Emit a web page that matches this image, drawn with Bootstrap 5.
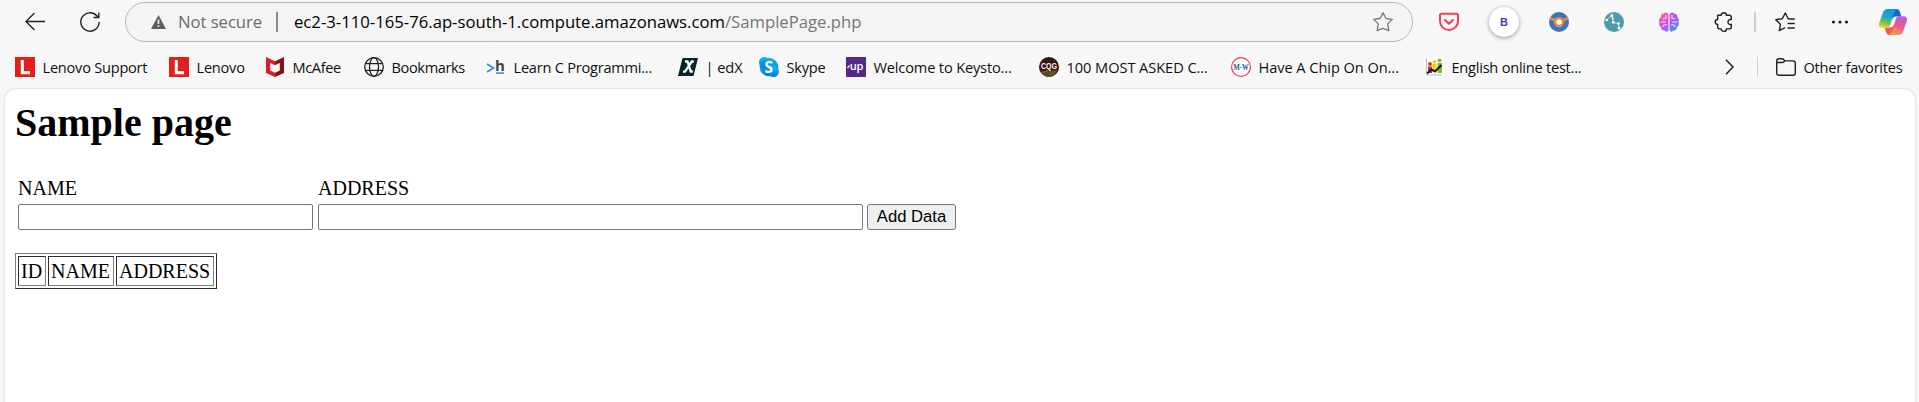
<!DOCTYPE html>
<html lang="en">
<head>
<meta charset="utf-8">
<title>Sample page</title>
<link href="https://cdn.jsdelivr.net/npm/bootstrap@5.3.0/dist/css/bootstrap.min.css" rel="stylesheet">
<style>
body{background:#f7f7f7;font-family:"Open Sans",sans-serif;color:#111;height:402px;overflow:hidden}
svg{display:block;flex:none;overflow:visible}
.toolbar{height:44px;padding-left:25px}
.toolbar,.favbar{white-space:nowrap}
.omnibox{width:1288px;height:40px;margin:0 26px 0 25px;padding:0 19px 0 25px;border:1px solid #b9b9b9;border-radius:20px;background:#f4f4f4;font-size:16.7px;line-height:24px}
.unsafe{margin-left:12px;width:98px;color:#6b6b6b;letter-spacing:-.05px}
.bar-rule{width:2px;height:20px;background:#8c8c8c;margin-right:16px}
.host{color:#000}
.path{color:#767676}
.ext{width:55px}
.ext-first{width:50px}
.avatar{width:30px;height:30px;margin-right:30px;background:#fff;box-shadow:0 1px 4px #0006;color:#4838b5;font:bold 11px "Liberation Sans",sans-serif}
.rule{width:1px;height:20px;background:#cfcfcf}
.favbar{height:45px;padding-left:15px;font-size:14.6px;line-height:20px}
.fav{gap:7.5px;letter-spacing:-.24px}
.w1{width:154px}.w2{width:95px}.w3{width:100px}.w4{width:122px}.w5{width:192px}.w6{width:81px}.w7{width:87px}.w8{width:193px}.w9{width:192px}.w10{width:193px}.w11{width:301px}
.w3,.w4{letter-spacing:-.38px}
.w6,.w9,.w10{letter-spacing:-.06px}
.w8{letter-spacing:-.16px}
.viewport{margin:0 4px 0 5px;height:330px;padding:0 10px;background:#fff;border-radius:11px 11px 0 0;box-shadow:0 0 2px #0004;font-family:"Liberation Serif",serif;font-size:20px;line-height:23px;color:#000}
.viewport h1{font-size:40px;font-weight:700;line-height:46px;padding-top:11px;margin-bottom:31px}
.entry{padding-left:3px;column-gap:5px}
.entry input{display:block;height:26px;border:1px solid #767676;border-radius:2px;margin-top:4px;background:#fff}
.in-name{width:295px}.in-address{width:545px}
.entry button{width:89px;height:26px;margin-left:-1px;border:1px solid #767676;border-radius:3px;background:#efefef;font:16.67px "Liberation Sans",sans-serif;line-height:22px;padding:0;color:#000}
.grid{width:202px;height:36px;margin-top:23px;padding:2px;gap:2px;border:1px solid;border-color:#808080 #2c2c2c #2c2c2c #808080}
.grid div{height:30px;border:1px solid;border-color:#2c2c2c #808080 #808080 #2c2c2c;padding-left:2px;line-height:29px}
.c1{width:28px}.c2{width:66px}.c3{width:98px}
</style>
<script src="https://cdn.jsdelivr.net/npm/bootstrap@5.3.0/dist/js/bootstrap.bundle.min.js"></script>
</head>
<body>
<svg width="0" height="0" class="position-absolute"><defs>
<symbol id="lenovo" viewBox="0 0 20 20"><path fill="#e1201c" d="M0 0h20v20H0z"/><path d="M7.3 3v12.8H15" fill="none" stroke="#fff" stroke-width="3"/></symbol>
<linearGradient id="mc" x1="0" x2="1"><stop offset=".45" stop-color="#d81f2b"/><stop offset=".6" stop-color="#7d1717"/></linearGradient>
<linearGradient id="sk" x1="0" x2="0" y1="0" y2="1"><stop stop-color="#10b9f3"/><stop offset="1" stop-color="#087bd5"/></linearGradient>
<linearGradient id="br" x1="0" x2="1" y1="0" y2="1"><stop stop-color="#ff8a20"/><stop offset=".3" stop-color="#ec48ca"/><stop offset=".6" stop-color="#a25bff"/><stop offset="1" stop-color="#18a8fa"/></linearGradient>
<linearGradient id="cpa" x1=".5" x2=".3" y1="0" y2="1"><stop stop-color="#1593e4"/><stop offset=".45" stop-color="#1aaebd"/><stop offset=".7" stop-color="#72bd4b"/><stop offset="1" stop-color="#f5cf20"/></linearGradient>
<linearGradient id="cpb" x1=".7" x2=".3" y1="0" y2="1"><stop stop-color="#ac62e8"/><stop offset=".5" stop-color="#ee578e"/><stop offset="1" stop-color="#ff9b4d"/></linearGradient>
</defs></svg>

<header>
<nav class="toolbar d-flex align-items-center" aria-label="Browser">
  <svg width="20" height="20" viewBox="0 0 20 20" fill="none" stroke="#222" stroke-width="1.3"><path d="M20 9.5H1M9.5 1 .9 9.5 9.5 18"/></svg>
  <svg width="20" height="20" viewBox="0 0 20 20" style="margin-left:35px" fill="none" stroke="#222" stroke-width="1.4"><path d="M19.2 10A9.2 9.2 0 1 1 16.8 3.8L18.8 5.5M18.8.5v5h-5.2"/></svg>
  <div class="omnibox d-flex align-items-center">
    <svg width="15" height="14" viewBox="0 0 15 14"><path fill="#5e5e5e" d="M7.5 0 15 14H0z"/><path stroke="#f4f4f4" stroke-width="1.6" d="M7.5 4.5V9m0 1.2v1.7"/></svg>
    <span class="unsafe">Not secure</span><span class="bar-rule"></span>
    <span class="host">ec2-3-110-165-76.ap-south-1.compute.amazonaws.com</span><span class="path">/SamplePage.php</span>
    <svg class="ms-auto" width="20" height="20" viewBox="0 0 20 20" fill="none" stroke="#777" stroke-width="1.3" stroke-linejoin="round"><path d="m10 .7 2.9 5.8 6.4.9-4.6 4.5 1.1 6.8L10 16.4l-5.8 2.3 1.1-6.8L.7 7.4l6.4-.9z"/></svg>
  </div>
  <div class="ext-first"><svg width="20" height="20" viewBox="0 0 20 20" fill="none" stroke="#ee4158" stroke-width="2" stroke-linecap="round" stroke-linejoin="round"><path d="M2.5 1.8h15q1.5 0 1.5 1.5V9a9 9 0 0 1-18 0V3.300q0-1.500 1.500-1.500zM6 8l4 3.800L14 8"/></svg></div>
  <div class="avatar rounded-circle d-flex align-items-center justify-content-center">B</div>
  <div class="ext"><svg width="20" height="20" viewBox="0 0 20 20"><circle cx="10" cy="10" r="10" fill="#3975bd"/><path d="M.8 6 6 8.500m8 0L19.200 6" stroke="#f0853e" stroke-width="2.500"/><circle cx="10" cy="10" r="4" fill="#fff" stroke="#f0853e" stroke-width="2.400"/></svg></div>
  <div class="ext"><svg width="20" height="20" viewBox="0 0 20 20"><circle cx="10" cy="10" r="10" fill="#4c9caa"/><path d="m2.500 8 5.300-4.500 1.500 7 5.200 1.300.5 4.500" fill="none" stroke="#d7edef" stroke-width=".8"/><g fill="#fff"><circle cx="2.700" cy="8" r="1.300"/><circle cx="7.800" cy="3.500" r="1.500"/><circle cx="9.300" cy="10.300" r="1.400"/><circle cx="14.500" cy="11.500" r="1.300"/><circle cx="15" cy="16" r="1.500"/><circle cx="9" cy="6.500" r="1"/></g></svg></div>
  <div class="ext"><svg width="20" height="20" viewBox="0 0 20 20"><path fill="url(#br)" d="M9.400 2Q7-.8 5 1.500 1.500 1.500 2 5-.8 7 .5 10-.5 13.500 2 15q.5 3.500 3.500 3.500Q8 21 9.400 18zM10.600 2Q13-.8 15 1.500 18.500 1.500 18 5q2.800 2 1.500 5 1 3.500-1.500 5-.5 3.500-3.500 3.500Q12 21 10.600 18z"/><path fill="none" stroke="#f6dfff" stroke-width="1.100" d="M7 3v3L4 7M2 10h5M4 15q0-3 4-2m5-10v3l3 1m2 3h-5m3 5q0-3-4-2"/></svg></div>
  <svg width="20" height="20" viewBox="0 0 20 20" style="margin-right:20px" fill="none" stroke="#222" stroke-width="1.400" stroke-linejoin="round"><path d="M3.500 3.200h3.700c0-3.200 5.200-3.200 5.200 0H15q2.300 0 2.300 1.800v2.500h-1.500a2.600 2.600 0 0 0 0 5h1.500v2.500q0 1.900-2.300 1.900h-2.600c0 3.300-5.200 3.300-5.200 0H5.500q-1.800 0-1.800-1.900v-2.500c-3.300 0-3.300-5 0-5V3.200z"/></svg>
  <span class="rule" style="width:2px;margin-right:19px"></span>
  <svg width="20" height="20" viewBox="0 0 20 20" fill="none" stroke="#222" stroke-width="1.400" stroke-linejoin="round"><path d="M19.800 7h-6.500l-3-6-3 5.700-6.500 1 4.700 4.600-1.200 6.300L10 15.700M12.500 11.500h7.300M12.500 16h7.300"/></svg>
  <svg width="18" height="4" viewBox="0 0 18 4" style="margin:0 30px 0 36px" fill="#222"><circle cx="2.500" cy="2" r="1.600"/><circle cx="9" cy="2" r="1.600"/><circle cx="15.500" cy="2" r="1.600"/></svg>
  <svg width="28" height="26" viewBox="0 0 28 26"><path fill="#1765d2" d="M13 0h4.500Q20 0 21 3l1.300 4.500H17q-3 0-4 3z"/><path fill="#f15b43" d="M15 26h-4.500Q8 26 7 23l-1.300-4.500H11q3 0 4-3z"/><path fill="url(#cpa)" d="M9 0h9q-2.300 1-3.200 4l-3.600 12q-.8 2.700-3.700 2.700H4q-5.500 0-3.600-5.500L4 3.500Q5.200 0 9 0z"/><path fill="url(#cpb)" d="M19 26h-9q2.300-1 3.200-4l3.600-12q.8-2.700 3.700-2.700H24q5.500 0 3.600 5.500L24 22.500Q22.800 26 19 26z"/></svg>
</nav>
<nav class="favbar d-flex align-items-center" aria-label="Favorites">
  <div class="fav w1 d-flex"><svg width="20" height="20"><use href="#lenovo"/></svg><span>Lenovo Support</span></div>
  <div class="fav w2 d-flex"><svg width="20" height="20"><use href="#lenovo"/></svg><span>Lenovo</span></div>
  <div class="fav w3 d-flex"><svg width="20" height="20" viewBox="0 0 20 20"><path fill="url(#mc)" d="m2 0 9 4.300L20 0v16l-9 4-9-4zm4.200 6v7.500l4.800 2.200 4.800-2.200V6L11 8.300z" fill-rule="evenodd"/></svg><span style="margin-left:1px">McAfee</span></div>
  <div class="fav w4 d-flex"><svg width="20" height="20" viewBox="0 0 20 20" fill="none" stroke="#222" stroke-width="1.300"><circle cx="10" cy="10" r="9.300"/><ellipse cx="10" cy="10" rx="4.500" ry="9.300"/><path d="M1.500 6.700h17m-17 6.600h17"/></svg><span>Bookmarks</span></div>
  <div class="fav w5 d-flex"><svg width="20" height="20" viewBox="0 0 20 20"><path d="m1 7 6.500 4L1 15" fill="none" stroke="#3c88ca" stroke-width="1.700"/><text x="9" y="13.500" font-family="Open Sans,sans-serif" font-weight="700" font-size="15" fill="#3a4349">h</text><path fill="#3c88ca" d="M10 15.300h8v1.500h-8z"/></svg><span>Learn C Programmi...</span></div>
  <div class="fav w6 d-flex"><svg width="20" height="20" viewBox="0 0 20 20"><path fill="#04262a" d="M4.500 1H20l-4.500 18H0z"/><path d="M7 4.500h2.500l3.300 10h2M15.800 4.500h-2L7 14.700H5" fill="none" stroke="#fff" stroke-width="2.300"/></svg><span>| edX</span></div>
  <div class="fav w7 d-flex"><svg width="20" height="20" viewBox="0 0 20 20"><g fill="url(#sk)"><circle cx="10" cy="10" r="9.300"/><circle cx="5.500" cy="5.500" r="5.500"/><circle cx="14.500" cy="14.500" r="5.500"/></g><text x="5.500" y="15.500" font-family="Open Sans,sans-serif" font-weight="700" font-size="15.500" fill="#fff">S</text></svg><span>Skype</span></div>
  <div class="fav w8 d-flex"><svg width="20" height="20" viewBox="0 0 20 20"><path fill="#572987" d="M0 0h20v20H0z"/><path d="m1.500 11 2-2.500" stroke="#fff" stroke-width="1.300"/><text x="3.800" y="13" font-family="Open Sans,sans-serif" font-weight="600" font-size="11" fill="#fff">up</text></svg><span>Welcome to Keysto...</span></div>
  <div class="fav w9 d-flex"><svg width="20" height="20" viewBox="0 0 20 20"><circle cx="10" cy="10" r="10" fill="#351711"/><path fill="#55492b" d="M1.500 14.500 18.500 13Q15 20 10 20q-5 0-8.500-5.500z"/><path stroke="#a9562a" d="m3 16 6-3m2 5 5-4"/><text x="2" y="12" font-family="Liberation Sans,sans-serif" font-weight="700" font-size="8.500" textLength="16" lengthAdjust="spacingAndGlyphs" fill="#fff0e8">CQG</text></svg><span>100 MOST ASKED C...</span></div>
  <div class="fav w10 d-flex"><svg width="20" height="20" viewBox="0 0 20 20"><circle cx="10" cy="10" r="9.400" fill="#fff" stroke="#e04451" stroke-width="1.200"/><text x="2.500" y="12.700" font-family="Liberation Serif,serif" font-weight="700" font-size="8" textLength="15" lengthAdjust="spacingAndGlyphs" fill="#1d5596">M-W</text></svg><span>Have A Chip On On...</span></div>
  <div class="fav w11 d-flex"><svg width="20" height="20" viewBox="0 0 20 20"><path fill="#fff" d="M0 0h20v20H0z"/><path d="M2.300 1v17H18" fill="none" stroke="#a8bdcb"/><g fill="#db2b24"><circle cx="6" cy="7" r="1.900"/><path d="M4 9.500h4V16H4z"/></g><g fill="#f4ce16"><circle cx="10.500" cy="4.800" r="1.900"/><path d="M8.500 7h4v8h-4z"/></g><g fill="#83b936"><circle cx="15.500" cy="3.300" r="1.900"/><path d="M13.500 6H18v10h-4.500z"/></g><path d="m3 16.500 4.500-4 3.500 2L17.500 8" fill="none" stroke="#182230" stroke-width="2.200"/></svg><span>English online test...</span></div>
  <svg width="9" height="16" viewBox="0 0 9 16" style="margin-right:23px" fill="none" stroke="#222" stroke-width="1.500"><path d="m1 .7 7 7.300-7 7.300"/></svg>
  <span class="rule" style="margin-right:18px"></span>
  <div class="fav d-flex"><svg width="20" height="20" viewBox="0 0 20 20" fill="none" stroke="#222" stroke-width="1.400" stroke-linejoin="round"><path d="M.7 5.500V4Q.7 1.700 3 1.700h3.200q1 0 1.600 1l1 1.200H17q2.300 0 2.300 2.300V16q0 2.300-2.300 2.300H3Q.7 18.300.7 16zh5.500q1 0 1.500-.6l1-1"/></svg><span>Other favorites</span></div>
</nav>
</header>
<main class="viewport">
  <h1>Sample page</h1>
  <form class="entry d-flex align-items-end">
    <div><label class="d-block" for="n">NAME</label><input id="n" class="in-name" type="text"></div>
    <div><label class="d-block" for="a">ADDRESS</label><input id="a" class="in-address" type="text"></div>
    <button type="button">Add Data</button>
  </form>
  <div class="grid d-flex"><div class="c1">ID</div><div class="c2">NAME</div><div class="c3">ADDRESS</div></div>
</main>
</body>
</html>
